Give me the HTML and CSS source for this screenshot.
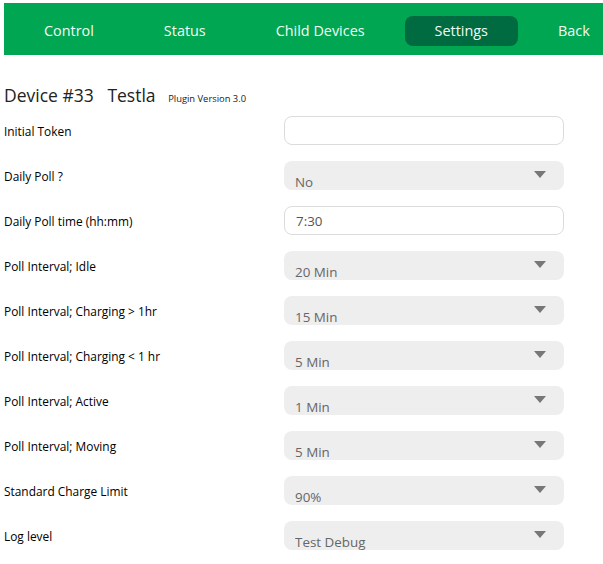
FILE: index.html
```html
<!DOCTYPE html>
<html>
<head>
<meta charset="utf-8">
<link rel="stylesheet" href="styles.css">
</head>
<body>
<nav class="topbar">
  <a class="nav-item">Control</a>
  <a class="nav-item">Status</a>
  <a class="nav-item">Child Devices</a>
  <a class="nav-item active">Settings</a>
  <a class="nav-item">Back</a>
</nav>
<h1 class="title">Device #33&nbsp;&nbsp; Testla <span class="version">Plugin Version 3.0</span></h1>
<form class="settings">
  <div class="row"><label class="lbl">Initial Token</label><input class="txt" type="text" value=""></div>
  <div class="row"><label class="lbl">Daily Poll ?</label><div class="sel"><select><option>No</option></select></div></div>
  <div class="row"><label class="lbl">Daily Poll time (hh:mm)</label><input class="txt" type="text" value="7:30"></div>
  <div class="row"><label class="lbl">Poll Interval; Idle</label><div class="sel"><select><option>20 Min</option></select></div></div>
  <div class="row"><label class="lbl">Poll Interval; Charging &gt; 1hr</label><div class="sel"><select><option>15 Min</option></select></div></div>
  <div class="row"><label class="lbl">Poll Interval; Charging &lt; 1 hr</label><div class="sel"><select><option>5 Min</option></select></div></div>
  <div class="row"><label class="lbl">Poll Interval; Active</label><div class="sel"><select><option>1 Min</option></select></div></div>
  <div class="row"><label class="lbl">Poll Interval; Moving</label><div class="sel"><select><option>5 Min</option></select></div></div>
  <div class="row"><label class="lbl">Standard Charge Limit</label><div class="sel"><select><option>90%</option></select></div></div>
  <div class="row"><label class="lbl">Log level</label><div class="sel"><select><option>Test Debug</option></select></div></div>
</form>
</body>
</html>
```
FILE: styles.css
```css
html, body {
  margin: 0;
  padding: 0;
  background: #fff;
}
body {
  font-family: "Open Sans", "Liberation Sans", sans-serif;
  color: #111;
  padding: 3px 0 0 4px;
  overflow: hidden;
}
.topbar {
  display: flex;
  align-items: center;
  gap: 10px;
  height: 52px;
  padding: 4px 0 0 10px;
  box-sizing: border-box;
  background: #00a651;
  white-space: nowrap;
}
.nav-item {
  display: block;
  padding: 0 30px;
  height: 30px;
  line-height: 30px;
  font-size: 14.4px;
  color: #f2fbf4;
  border-radius: 8px;
  flex: none;
}
.nav-item.active {
  background: #006b41;
}
.title {
  margin: 28px 0 0 0;
  font-size: 17.5px;
  font-weight: normal;
  color: #222;
  line-height: 24px;
}
.version {
  font-size: 9.4px;
  margin-left: 8px;
  color: #222;
}
.settings {
  margin-top: 5px;
  display: flex;
  flex-direction: column;
  gap: 16px;
}
.row {
  display: flex;
  align-items: center;
  height: 29px;
}
.lbl {
  width: 280px;
  font-size: 11.9px;
  color: #000;
}
.txt {
  width: 280px;
  height: 29px;
  box-sizing: border-box;
  border: 1px solid #dcdcdc;
  border-radius: 8px;
  padding: 0 11px;
  font-family: inherit;
  font-size: 13.4px;
  color: #555;
  background: #fff;
  outline: none;
}
.sel {
  position: relative;
  width: 280px;
  height: 29px;
}
.sel select {
  appearance: none;
  -webkit-appearance: none;
  width: 100%;
  height: 29px;
  box-sizing: border-box;
  border: none;
  border-radius: 8px;
  background: #eeeeee;
  padding: 12px 0 0 11px;
  font-family: inherit;
  font-size: 13.4px;
  color: #666;
  outline: none;
}
.sel::after {
  content: "";
  position: absolute;
  right: 18px;
  top: 10px;
  border-left: 6px solid transparent;
  border-right: 6px solid transparent;
  border-top: 7px solid #777;
  pointer-events: none;
}
```
